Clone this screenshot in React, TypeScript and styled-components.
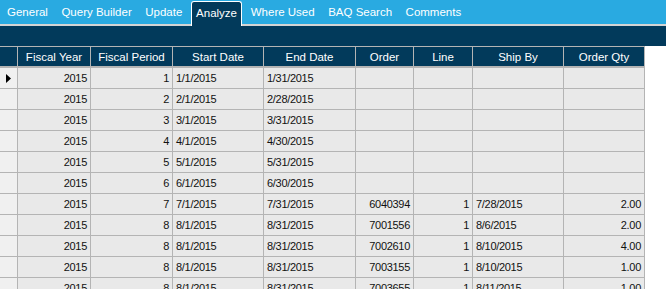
import React from "react";
import styled, { createGlobalStyle } from "styled-components";

const Global = createGlobalStyle`
  html, body { margin: 0; padding: 0; background: #ffffff; }
  body { font-family: "Liberation Sans", Arial, sans-serif; }
`;

const Page = styled.div`
  width: 666px;
  height: 289px;
  overflow: hidden;
  background: #ffffff;
`;

const TabBar = styled.div`
  display: flex;
  align-items: flex-end;
  height: 24px;
  background: #29aae1;
  border-bottom: 2px solid #d4d4d4;
  padding-left: 0.25px;
`;

const Tab = styled.div<{ $active?: boolean }>`
  box-sizing: border-box;
  display: flex;
  align-items: center;
  font-size: 11.5px;
  color: #ffffff;
  white-space: nowrap;
  ${(p) =>
    p.$active
      ? `
    height: 25px;
    margin: 0 2px -2px 2px;
    padding: 0 4px 3px 4px;
    background: #023a5b;
    border: 1px solid #ffffff;
    border-bottom: none;
    border-radius: 3px 3px 0 0;
  `
      : `
    height: 24px;
    padding: 0 6.75px 1px 6.75px;
  `}
`;

const NavBar = styled.div`
  height: 20px;
  background: #023a5b;
`;

const Grid = styled.div`
  display: grid;
  grid-template-columns: 17px 72px 81px 90px 91px 57px 58px 90px 80px;
  grid-auto-rows: 20px;
  column-gap: 1px;
  row-gap: 1px;
  width: 644px;
  padding: 1px 1px 0 0;
  background: #b4b4b4;
`;

const HeadCell = styled.div`
  height: 19px;
  background: #023a5b;
  color: #ffffff;
  font-size: 11.5px;
  display: flex;
  align-items: center;
  justify-content: center;
  white-space: nowrap;
  overflow: hidden;
`;

const Selector = styled.div`
  background: #f0f0f0;
  display: flex;
  align-items: center;
  padding-left: 6px;
`;

const Cell = styled.div<{ $right?: boolean }>`
  background: #e9e9e9;
  color: #111111;
  font-size: 11px;
  letter-spacing: -0.3px;
  display: flex;
  align-items: center;
  padding: 0 3px 1px 3px;
  justify-content: ${(p) => (p.$right ? "flex-end" : "flex-start")};
  white-space: nowrap;
  overflow: hidden;
`;

const Arrow = () => (
  <svg width="5" height="9" viewBox="0 0 5 9">
    <polygon points="0,0 5,4.5 0,9" fill="#000" />
  </svg>
);

const tabs = ["General", "Query Builder", "Update", "Analyze", "Where Used", "BAQ Search", "Comments"];

const columns: { title: string; right: boolean }[] = [
  { title: "Fiscal Year", right: true },
  { title: "Fiscal Period", right: true },
  { title: "Start Date", right: false },
  { title: "End Date", right: false },
  { title: "Order", right: true },
  { title: "Line", right: true },
  { title: "Ship By", right: false },
  { title: "Order Qty", right: true },
];

const rows: string[][] = [
  ["2015", "1", "1/1/2015", "1/31/2015", "", "", "", ""],
  ["2015", "2", "2/1/2015", "2/28/2015", "", "", "", ""],
  ["2015", "3", "3/1/2015", "3/31/2015", "", "", "", ""],
  ["2015", "4", "4/1/2015", "4/30/2015", "", "", "", ""],
  ["2015", "5", "5/1/2015", "5/31/2015", "", "", "", ""],
  ["2015", "6", "6/1/2015", "6/30/2015", "", "", "", ""],
  ["2015", "7", "7/1/2015", "7/31/2015", "6040394", "1", "7/28/2015", "2.00"],
  ["2015", "8", "8/1/2015", "8/31/2015", "7001556", "1", "8/6/2015", "2.00"],
  ["2015", "8", "8/1/2015", "8/31/2015", "7002610", "1", "8/10/2015", "4.00"],
  ["2015", "8", "8/1/2015", "8/31/2015", "7003155", "1", "8/10/2015", "1.00"],
  ["2015", "8", "8/1/2015", "8/31/2015", "7003655", "1", "8/11/2015", "1.00"],
];

export default function App() {
  return (
    <Page>
      <Global />
      <TabBar>
        {tabs.map((t) => (
          <Tab key={t} $active={t === "Analyze"}>
            {t}
          </Tab>
        ))}
      </TabBar>
      <NavBar />
      <Grid>
        <HeadCell />
        {columns.map((c) => (
          <HeadCell key={c.title}>{c.title}</HeadCell>
        ))}
        {rows.map((r, i) => (
          <React.Fragment key={i}>
            <Selector>{i === 0 ? <Arrow /> : null}</Selector>
            {r.map((v, j) => (
              <Cell key={j} $right={columns[j].right}>
                {v}
              </Cell>
            ))}
          </React.Fragment>
        ))}
      </Grid>
    </Page>
  );
}
